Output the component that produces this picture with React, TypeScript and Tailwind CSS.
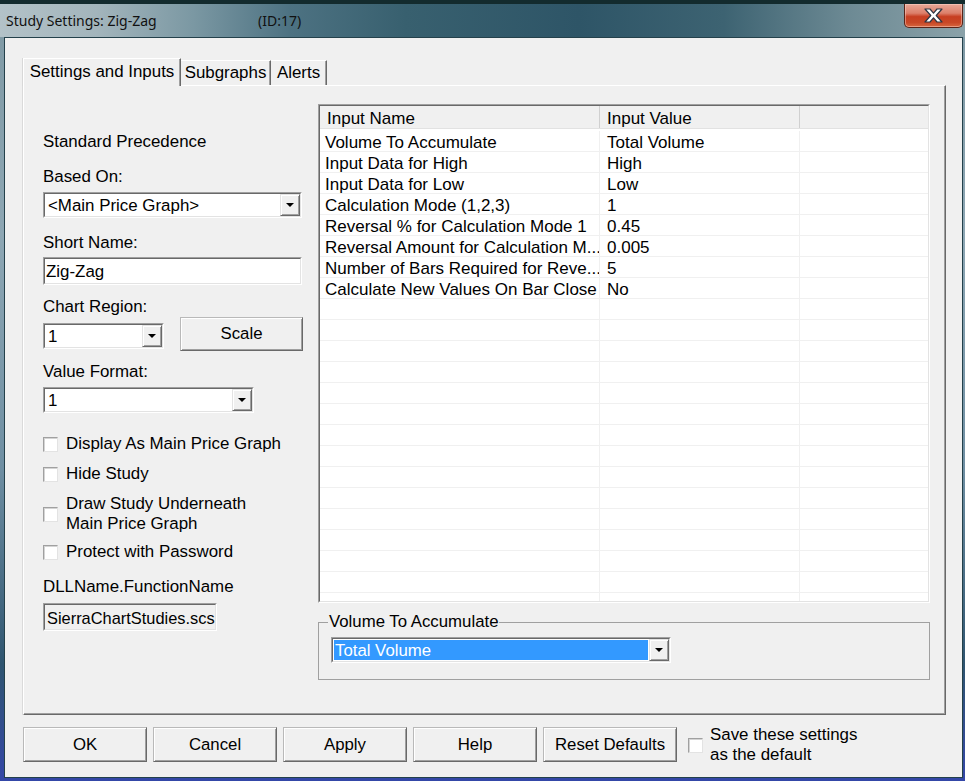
import React from "react";

const ROWS: [string, string][] = [
  ["Volume To Accumulate", "Total Volume"],
  ["Input Data for High", "High"],
  ["Input Data for Low", "Low"],
  ["Calculation Mode (1,2,3)", "1"],
  ["Reversal % for Calculation Mode 1", "0.45"],
  ["Reversal Amount for Calculation M...", "0.005"],
  ["Number of Bars Required for Reve...", "5"],
  ["Calculate New Values On Bar Close", "No"],
];

function Arrow() {
  return (
    <svg width="8" height="4" viewBox="0 0 8 4">
      <path d="M0 0H8L4 4Z" fill="#000" />
    </svg>
  );
}

function DropBtn() {
  return (
    <div className="flex h-full w-[20px] shrink-0 items-center justify-center border border-t-[#e3e3e3] border-l-[#e3e3e3] border-r-[#696969] border-b-[#696969] bg-[#f0f0f0] shadow-[inset_1px_1px_0_#ffffff,inset_-1px_-1px_0_#a0a0a0]">
      <Arrow />
    </div>
  );
}

function Sunken({
  className,
  inner,
  children,
}: {
  className: string;
  inner: string;
  children?: React.ReactNode;
}) {
  return (
    <div className={`border border-[#a0a0a0] border-r-white border-b-white ${className}`}>
      <div
        className={`flex h-full border border-[#696969] border-r-[#e3e3e3] border-b-[#e3e3e3] ${inner}`}
      >
        {children}
      </div>
    </div>
  );
}

function Combo({
  className,
  value,
  selected,
}: {
  className: string;
  value: string;
  selected?: boolean;
}) {
  return (
    <Sunken className={`h-[26px] ${className}`} inner="bg-white">
      {selected ? (
        <div className="flex min-w-0 flex-1 p-[1px]">
          <div className="flex flex-1 items-center overflow-hidden whitespace-nowrap bg-[#3399ff] pl-[1px] pt-[1px] text-[16.8px] text-white">
            {value}
          </div>
        </div>
      ) : (
        <div className="flex min-w-0 flex-1 items-center overflow-hidden whitespace-nowrap pl-[3px] pt-[1px]">
          {value}
        </div>
      )}
      <DropBtn />
    </Sunken>
  );
}

function Btn({ className, children }: { className: string; children: React.ReactNode }) {
  return (
    <button
      type="button"
      className={`flex items-center justify-center border border-t-[#b9b9b9] border-l-[#b9b9b9] border-r-[#696969] border-b-[#696969] bg-[#f0f0f0] text-[16.8px] leading-[20px] shadow-[inset_1px_1px_0_#ffffff,inset_-1px_-1px_0_#a0a0a0] ${className}`}
    >
      {children}
    </button>
  );
}

function Check() {
  return (
    <span className="block h-[15px] w-[15px] shrink-0 border border-[#a0a0a0] border-r-[#e3e3e3] border-b-[#e3e3e3] bg-white shadow-[inset_1px_1px_0_#d4d4d4]" />
  );
}

function CheckRow({ children, className }: { children: React.ReactNode; className: string }) {
  return (
    <div className={`flex items-center gap-[8px] ${className}`}>
      <Check />
      <div>{children}</div>
    </div>
  );
}

function CloseBtn() {
  return (
    <div className="ml-auto mr-[2px] flex h-[24px] w-[59px] items-center justify-center rounded-b-[5px] border border-t-0 border-[#5a2418] bg-[linear-gradient(180deg,#e6a898_0%,#dc7f6a_40%,#c73f22_55%,#c84726_80%,#d7673f_100%)] shadow-[inset_0_0_0_1px_rgba(255,220,210,0.45)]">
      <svg width="19" height="15" viewBox="-1 -1 19 15">
        <polygon
          points="0,0 5,0 8.5,4.2 12,0 17,0 11.2,6.5 17,13 12,13 8.5,8.8 5,13 0,13 5.8,6.5"
          fill="#ffffff"
          stroke="#2e3644"
          strokeWidth="1.2"
          strokeLinejoin="round"
        />
      </svg>
    </div>
  );
}

export default function App() {
  const emptyRows = Array.from({ length: 15 });
  return (
    <div className="flex h-[781px] w-[965px] flex-col overflow-hidden bg-[linear-gradient(180deg,#7e98a3_0%,#8ea7b4_30%,#6f8fa3_60%,#2f5570_85%,#3447a8_100%)] font-['Liberation_Sans',Arial,sans-serif] text-[16.9px] leading-[20px] text-black">
      {/* title bar */}
      <div className="flex h-[37px] shrink-0 flex-col bg-[linear-gradient(90deg,#b3c2c8_0%,#a3b5bc_10%,#7b98a3_20%,#4d7282_30%,#38606f_42%,#2e5567_60%,#3d6372_75%,#6d8a94_88%,#8ba2a9_100%)]">
        <div className="h-[4px] shrink-0 bg-[#132b2e]" />
        <div className="flex flex-1 items-start">
          <span className="ml-[6px] mt-[7px] w-[252px] whitespace-nowrap font-['Noto_Sans',sans-serif] text-[14px] leading-[20px] text-[#111]">
            Study Settings: Zig-Zag
          </span>
          <span className="mt-[7px] whitespace-nowrap font-['Noto_Sans',sans-serif] text-[14px] leading-[20px] text-[#111]">
            (ID:17)
          </span>
          <CloseBtn />
        </div>
      </div>

      {/* client area */}
      <div className="flex min-h-0 flex-1 pb-[3px] pl-[4px] pr-[2px]">
        <div className="flex flex-1 flex-col border border-[#24414b] bg-[#f0f0f0]">
          {/* tabs */}
          <div className="ml-[18px] mt-[20px] flex h-[27px] items-end">
            <div className="relative z-10 -mb-[1px] flex h-[28px] w-[158px] items-center justify-center border-l border-t border-l-[#ffffff] border-t-[#ffffff] border-r border-r-[#696969] bg-[#f0f0f0] pb-[1px] shadow-[inset_-1px_0_0_#a0a0a0,-1px_0_0_#d8d8d8]">
              Settings and Inputs
            </div>
            <div className="flex h-[25px] w-[90px] items-center justify-center border-t border-t-white border-r border-r-[#696969] bg-[#f0f0f0] shadow-[inset_-1px_0_0_#a0a0a0]">
              Subgraphs
            </div>
            <div className="flex h-[25px] w-[56px] items-center justify-center border-t border-t-white border-r border-r-[#696969] bg-[#f0f0f0] shadow-[inset_-1px_0_0_#a0a0a0]">
              Alerts
            </div>
          </div>

          {/* tab panel */}
          <div className="ml-[18px] flex h-[630px] w-[923px] border-l border-t border-l-white border-t-white border-r border-b border-r-[#696969] border-b-[#696969] shadow-[inset_-1px_-1px_0_#a0a0a0,-1px_0_0_#dadada]">
            {/* left column */}
            <div className="ml-[19px] flex w-[275px] flex-col pt-[46px]">
              <div>Standard Precedence</div>
              <div className="mt-[15px]">Based On:</div>
              <Combo className="mt-[5px] w-[259px]" value="<Main Price Graph>" />
              <div className="mt-[15px]">Short Name:</div>
              <Sunken className="mt-[4px] h-[28px] w-[259px]" inner="items-center bg-white pl-[1px] pt-[1px]">
                Zig-Zag
              </Sunken>
              <div className="mt-[12px]">Chart Region:</div>
              <div className="flex h-[34px] items-start gap-[16px]">
                <Combo className="mt-[6px] w-[121px]" value="1" />
                <Btn className="h-[34px] w-[123px]">Scale</Btn>
              </div>
              <div className="mt-[11px]">Value Format:</div>
              <Combo className="mt-[5px] w-[211px]" value="1" />
              <CheckRow className="mt-[21px]">Display As Main Price Graph</CheckRow>
              <CheckRow className="mt-[10px]">Hide Study</CheckRow>
              <CheckRow className="mt-[10px]">
                Draw Study Underneath
                <br />
                Main Price Graph
              </CheckRow>
              <CheckRow className="mt-[8px]">Protect with Password</CheckRow>
              <div className="mt-[15px]">DLLName.FunctionName</div>
              <Sunken
                className="mt-[6px] h-[28px] w-[174px]"
                inner="items-center overflow-hidden whitespace-nowrap bg-[#f0f0f0] pl-[2px] pt-[1px] text-[16.4px]"
              >
                SierraChartStudies.scs
              </Sunken>
            </div>

            {/* right column */}
            <div className="flex flex-col pt-[18px]">
              <div className="h-[499px] w-[612px] border border-[#a0a0a0] border-r-white border-b-white">
                <div className="flex h-full flex-col overflow-hidden border border-[#696969] border-r-[#e3e3e3] border-b-[#e3e3e3] bg-white text-[17px]">
                  <div className="flex h-[23px] shrink-0 border-b border-[#e2e2e2] bg-[#f0f0f0]">
                    <div className="w-[280px] border-r border-[#d0d0d0] pl-[7px] pt-[3px]">Input Name</div>
                    <div className="w-[200px] border-r border-[#d0d0d0] pl-[7px] pt-[3px]">Input Value</div>
                    <div className="flex-1" />
                  </div>
                  <div className="mt-[2px] flex flex-col">
                    {ROWS.map(([n, v]) => (
                      <div key={n} className="flex h-[21px] shrink-0 border-b border-[#f0f0f0]">
                        <div className="w-[280px] overflow-hidden whitespace-nowrap border-r border-[#f0f0f0] pl-[5px] pt-[2px]">
                          {n}
                        </div>
                        <div className="w-[200px] border-r border-[#f0f0f0] pl-[7px] pt-[2px]">{v}</div>
                        <div className="flex-1" />
                      </div>
                    ))}
                    {emptyRows.map((_, i) => (
                      <div key={i} className="flex h-[21px] shrink-0 border-b border-[#f0f0f0]">
                        <div className="w-[280px] border-r border-[#f0f0f0]" />
                        <div className="w-[200px] border-r border-[#f0f0f0]" />
                        <div className="flex-1" />
                      </div>
                    ))}
                  </div>
                </div>
              </div>

              <fieldset className="mt-[9px] h-[68px] w-[612px] border border-[#a0a0a0] pl-[12px]">
                <legend className="-ml-[3px] px-[1px] text-[16.8px] leading-[20px]">Volume To Accumulate</legend>
                <Combo className="mt-[5px] w-[340px]" value="Total Volume" selected />
              </fieldset>
            </div>
          </div>

          {/* bottom buttons */}
          <div className="ml-[18px] mt-[12px] flex h-[35px] items-center gap-[6px]">
            <Btn className="h-[35px] w-[124px]">OK</Btn>
            <Btn className="h-[35px] w-[124px]">Cancel</Btn>
            <Btn className="h-[35px] w-[124px]">Apply</Btn>
            <Btn className="h-[35px] w-[124px]">Help</Btn>
            <Btn className="h-[35px] w-[134px]">Reset Defaults</Btn>
            <div className="ml-[5px] flex items-center gap-[7px] pt-[1px]">
              <Check />
              <div>
                Save these settings
                <br />
                as the default
              </div>
            </div>
          </div>
        </div>
      </div>
    </div>
  );
}
